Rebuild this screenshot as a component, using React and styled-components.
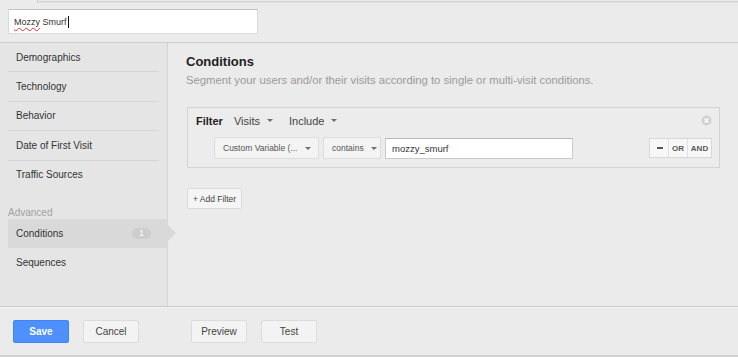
import React from "react"
import styled, { createGlobalStyle } from "styled-components"

const GlobalStyle = createGlobalStyle`
  html, body {
    margin: 0;
    padding: 0;
    background: #ebebeb;
  }
  body {
    font-family: "Liberation Sans", Arial, sans-serif;
    color: #333;
  }
  * {
    box-sizing: border-box;
  }
`

const Page = styled.div`
  display: flex;
  flex-direction: column;
  width: 738px;
  height: 357px;
  overflow: hidden;
  background: #ebebeb;
`

const TopEdge = styled.div`
  display: flex;
  height: 3px;
`

const TopTab = styled.div`
  width: 38px;
  border-right: 1px solid #d3d3d3;
`

const TopRule = styled.div`
  flex: 1;
  margin-top: 1px;
  border-top: 1px solid #d0d0d0;
  border-bottom: 1px solid #e2e2e2;
`

const Header = styled.div`
  height: 40px;
  padding: 6px 0 0 8px;
  border-bottom: 1px solid #cdcdcd;
`

const NameField = styled.div`
  display: flex;
  align-items: center;
  width: 250px;
  height: 25px;
  padding: 0 5px;
  background: #fff;
  border: 1px solid #d9d9d9;
  border-top-color: #c2c2c2;
  font-size: 9px;
  color: #333;
`

const Misspelled = styled.span`
  text-decoration: underline wavy #d33;
  text-decoration-thickness: 1px;
  text-underline-offset: 2px;
`

const Cursor = styled.span`
  display: inline-block;
  width: 1px;
  height: 12px;
  margin-left: 1px;
  background: #111;
`

const Body = styled.div`
  display: flex;
  flex: 1;
  min-height: 0;
`

const Sidebar = styled.div`
  width: 168px;
  padding-left: 8px;
  background: #e5e5e5;
  border-right: 1px solid #d4d4d4;
`

const NavItem = styled.div`
  position: relative;
  display: flex;
  align-items: center;
  height: 29.4px;
  padding-left: 8px;
  margin-right: ${(p) => (p.$active ? "-1px" : "8px")};
  font-size: 10px;
  color: #333;
  background: ${(p) => (p.$active ? "#d9d9d9" : "transparent")};
  border-bottom: 1px solid ${(p) => (p.$plain || p.$active ? "transparent" : "#d5d5d5")};

  ${(p) =>
    p.$active &&
    `
    &::after {
      content: "";
      position: absolute;
      left: 100%;
      top: 6px;
      border-top: 8px solid transparent;
      border-bottom: 8px solid transparent;
      border-left: 8px solid #d9d9d9;
    }
  `}
`

const GroupLabel = styled.div`
  padding-top: 16px;
  line-height: 13px;
  font-size: 10px;
  color: #a2a2a2;
`

const Badge = styled.span`
  display: flex;
  align-items: center;
  justify-content: center;
  width: 19px;
  height: 11px;
  margin-left: auto;
  margin-right: 17px;
  border-radius: 6px;
  background: #cdcdcd;
  color: #fff;
  font-size: 9px;
`

const Main = styled.div`
  flex: 1;
  padding: 11px 18px 0 18px;
`

const Title = styled.div`
  font-size: 13px;
  line-height: 16px;
  font-weight: bold;
  color: #222;
`

const Subtitle = styled.div`
  margin-top: 3px;
  font-size: 11.3px;
  line-height: 14px;
  color: #9a9a9a;
`

const FilterBox = styled.div`
  margin: 20px 0 0 1px;
  padding-bottom: 8px;
  background: #ececec;
  border: 1px solid #d3d3d3;
`

const FilterHead = styled.div`
  display: flex;
  align-items: center;
  height: 25px;
  padding: 0 7px 0 8px;
  font-size: 11px;
  color: #444;
`

const FilterLabel = styled.span`
  font-weight: bold;
  color: #222;
  margin-right: 11px;
`

const Menu = styled.span`
  display: flex;
  align-items: center;
  margin-right: 16px;
`

const Caret = styled.span`
  display: inline-block;
  margin-left: 7px;
  border-left: 3px solid transparent;
  border-right: 3px solid transparent;
  border-top: 3px solid #6d6d6d;
`

const CloseIcon = styled.svg`
  margin-left: auto;
`

const ConditionRow = styled.div`
  display: flex;
  align-items: center;
  gap: 4px;
  margin-top: 4px;
  padding: 0 7px 0 26px;
`

const Select = styled.div`
  display: flex;
  align-items: center;
  justify-content: space-between;
  width: ${(p) => p.$width}px;
  height: 22px;
  padding: 0 7px 0 8px;
  background: #f3f3f3;
  border: 1px solid #dcdcdc;
  border-radius: 2px;
  font-size: ${(p) => p.$size || 9}px;
  color: #555;
  white-space: nowrap;
`

const ValueInput = styled.div`
  display: flex;
  align-items: center;
  width: 188px;
  height: 21px;
  padding-left: 6px;
  background: #fff;
  border: 1px solid #cbcbcb;
  border-top-color: #b5b5b5;
  font-size: 9.5px;
  color: #333;
`

const LogicGroup = styled.div`
  display: flex;
  height: 20px;
  margin-left: auto;
  background: #f7f7f7;
  border: 1px solid #d8d8d8;
`

const LogicButton = styled.div`
  display: flex;
  align-items: center;
  justify-content: center;
  width: ${(p) => p.$width}px;
  font-size: 8px;
  font-weight: bold;
  color: #5a5a5a;
  border-left: 1px solid ${(p) => (p.$first ? "transparent" : "#e0e0e0")};
`

const Dash = styled.span`
  width: 6px;
  height: 2px;
  background: #555;
`

const AddFilter = styled.div`
  display: inline-flex;
  align-items: center;
  justify-content: center;
  width: 55px;
  height: 21px;
  margin: 20px 0 0 1px;
  background: #f5f5f5;
  border: 1px solid #dadada;
  border-radius: 2px;
  font-size: 8.5px;
  color: #444;
`

const Footer = styled.div`
  display: flex;
  align-items: flex-start;
  height: 51px;
  padding: 13px 13px 0 13px;
  border-top: 1px solid #cacaca;
  border-bottom: 2px solid #d2d2d2;
  box-shadow: inset 0 1px 0 #f2f2f2;
`

const Button = styled.div`
  display: flex;
  align-items: center;
  justify-content: center;
  width: 56px;
  height: 23px;
  margin-left: ${(p) => p.$gap || 0}px;
  border-radius: 2px;
  font-size: 10px;
  background: ${(p) => (p.$primary ? "#4d90fe" : "#f3f3f3")};
  border: 1px solid ${(p) => (p.$primary ? "#3f85f5" : "#dcdcdc")};
  color: ${(p) => (p.$primary ? "#fff" : "#444")};
  font-weight: ${(p) => (p.$primary ? "bold" : "normal")};
`

const navItems = ["Demographics", "Technology", "Behavior", "Date of First Visit", "Traffic Sources"]

export default function App() {
  return (
    <Page>
      <GlobalStyle />
      <TopEdge>
        <TopTab />
        <TopRule />
      </TopEdge>
      <Header>
        <NameField>
          <Misspelled>Mozzy</Misspelled>&nbsp;Smurf
          <Cursor />
        </NameField>
      </Header>
      <Body>
        <Sidebar>
          {navItems.map((item, i) => (
            <NavItem key={item} $plain={i === navItems.length - 1}>
              {item}
            </NavItem>
          ))}
          <GroupLabel>Advanced</GroupLabel>
          <NavItem $active>
            Conditions
            <Badge>1</Badge>
          </NavItem>
          <NavItem $plain>Sequences</NavItem>
        </Sidebar>
        <Main>
          <Title>Conditions</Title>
          <Subtitle>
            Segment your users and/or their visits according to single or multi-visit conditions.
          </Subtitle>
          <FilterBox>
            <FilterHead>
              <FilterLabel>Filter</FilterLabel>
              <Menu>
                Visits
                <Caret />
              </Menu>
              <Menu>
                Include
                <Caret />
              </Menu>
              <CloseIcon width="11" height="11" viewBox="0 0 11 11">
                <circle cx="5.5" cy="5.5" r="5" fill="#d2d2d2" />
                <path d="M3.5 3.5 L7.5 7.5 M7.5 3.5 L3.5 7.5" stroke="#fff" strokeWidth="1.3" />
              </CloseIcon>
            </FilterHead>
            <ConditionRow>
              <Select $width={105} $size={8.5}>
                Custom Variable (...
                <Caret />
              </Select>
              <Select $width={58} $size={8.5}>
                contains
                <Caret />
              </Select>
              <ValueInput>mozzy_smurf</ValueInput>
              <LogicGroup>
                <LogicButton $width={18} $first>
                  <Dash />
                </LogicButton>
                <LogicButton $width={19}>OR</LogicButton>
                <LogicButton $width={24}>AND</LogicButton>
              </LogicGroup>
            </ConditionRow>
          </FilterBox>
          <AddFilter>+ Add Filter</AddFilter>
        </Main>
      </Body>
      <Footer>
        <Button $primary>Save</Button>
        <Button $gap={14}>Cancel</Button>
        <Button $gap={52}>Preview</Button>
        <Button $gap={14}>Test</Button>
      </Footer>
    </Page>
  )
}
